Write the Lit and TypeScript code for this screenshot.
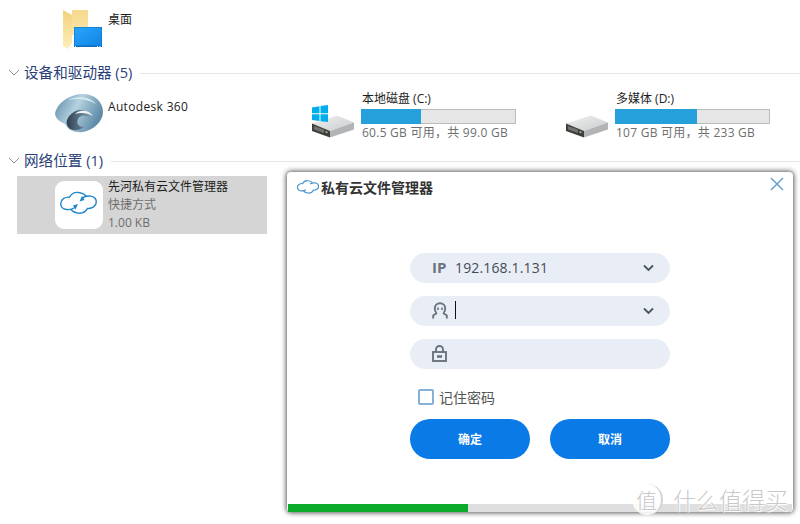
import { LitElement, html, css, svg } from "lit";
import { customElement } from "lit/decorators.js";

const chevron = html`<svg class="grp-chev" width="12" height="8" viewBox="0 0 12 8"><path d="M1 1l5 5 5-5" fill="none" stroke="#8a8f99" stroke-width="1"/></svg>`;

const cloud = svg`
  <path d="M20 26.5C17 28.5 14 28.8 11.5 28.5C7.5 28 5.7 25.5 5.7 22.5C5.7 18.5 10 15.7 14.5 16.2C16.5 12.5 20.5 11 24 11.5C26.5 11.8 29 12.8 31 14.8" />
  <path d="M27 17.1C30 15.1 33 14.8 35.5 15.1C39.5 15.6 41.3 18.1 41.3 21.1C41.3 25.1 37 27.9 32.5 27.4C30.5 31.1 26.5 32.6 23 32.1C20.5 31.8 18 30.8 16 28.8" />`;

const arrows = svg`
  <path d="M23 23L18 24.5L20.5 28.5Z" fill="#1f86c9" stroke="none"/>
  <path d="M24.5 20.5L29.5 19L27 15Z" fill="#1f86c9" stroke="none"/>`;

const driveBody = svg`
  <path d="M3 35.5L28 27.5L45 34.5L21 43Z" fill="url(#topface)"/>
  <path d="M3 35.5L21 43L21 49.5L3 43Z" fill="#3d3f3c"/>
  <path d="M21 43L45 34.5L45 41.5L21 49.5Z" fill="#b2b4b6"/>
  <path d="M5 38L15 41.5L15 45L5 41.5Z" fill="#6f746c"/>
  <path d="M16.5 43l2 .8v1.4l-2-.8z" fill="#a6d39a"/>`;

@customElement("app-root")
export class AppRoot extends LitElement {
  static styles = css`
    :host {
      display: block;
      position: relative;
      width: 800px;
      height: 524px;
      overflow: hidden;
      background: #fff;
      font-family: "Open Sans", "Noto Sans CJK SC", sans-serif;
      font-size: 12px;
      color: #1c1c1c;
    }
    .defs { position: absolute; width: 0; height: 0; }
    .explorer { display: flex; flex-direction: column; }
    .row { display: flex; padding: 4px 0 4px 17px; }
    .row.first { height: 57px; padding: 5px 0 0 17px; }
    .tile { display: flex; width: 250px; height: 58px; margin-right: 4px; flex: none; }
    .tile.sel { background: #d5d5d5; }
    .ico { margin-left: 38px; width: 48px; height: 58px; display: block; flex: none; overflow: visible; }
    .body { margin-left: 5px; padding-top: 2px; display: flex; flex-direction: column; line-height: 18px; white-space: nowrap; }
    .body.top { padding-top: 6px; }
    .body.low { padding-top: 10px; letter-spacing: .33px; }
    .sub { color: #6e6e6e; }
    .wide { letter-spacing: .25px; }
    .meter { width: 155px; height: 15px; margin: 1px 0 0 -1px; background: #e6e6e6; border: 1px solid #bcbcbc; box-sizing: border-box; }
    .fill { height: 15px; background: #26a0da; margin: -1px 0 0 -1px; }
    .grp { display: flex; align-items: center; height: 22px; padding-left: 8px; color: #2a3f78; font-size: 14.6px; white-space: nowrap; }
    .grp span { position: relative; top: -2px; }
    .grp-chev { margin-right: 4px; flex: none; }
    .grp i { flex: 1; height: 1px; background: #e5e5e5; margin-left: 8px; }

    .dialog {
      position: absolute; left: 287px; top: 172px; width: 506px; height: 340px;
      background: #fff; border-radius: 4px;
      box-shadow: 0 0 5px 1px rgba(0, 0, 0, 0.65);
      display: flex; flex-direction: column; box-sizing: border-box;
    }
    .title { display: flex; align-items: center; height: 32px; padding: 0 0 2px 10px; box-sizing: border-box; font-size: 14px; font-weight: 700; color: #333; position: relative; }
    .title svg.logo { margin-right: 2px; }
    .close { position: absolute; right: 9px; top: 5px; display: block; }
    .form { width: 260px; margin: 49px auto 0; display: flex; flex-direction: column; flex: 1; }
    .field {
      height: 30px; border-radius: 15px; background: #e9eef6; margin-bottom: 13px;
      display: flex; align-items: center; padding: 0 16px 0 22px; box-sizing: border-box;
      font-size: 14px; color: #444b55;
    }
    .field .lead { width: 23px; flex: none; display: flex; align-items: center; font-size: 15px; font-weight: 700; color: #6a737e; }
    .field .val { flex: 1; display: flex; align-items: center; letter-spacing: .15px; position: relative; top: -1px; }
    .field .lead span, .field .lead svg { position: relative; top: -1px; }
    .caret { width: 1px; height: 18px; background: #111; }
    .check { display: flex; align-items: center; margin: 3px 0 0 8px; height: 24px; font-size: 14px; color: #555; }
    .box { width: 16px; height: 16px; border: 2px solid #85b0dc; border-radius: 2px; box-sizing: border-box; margin-right: 5px; }
    .btns { display: flex; justify-content: space-between; margin-top: 10px; }
    .btn { width: 120px; height: 40px; border-radius: 20px; background: #0a7ae6; color: #fff; font-size: 12px; font-weight: 700; display: flex; align-items: center; justify-content: center; }
    .prog { height: 8px; background: #dfdfdf; margin: 0 1px; }
    .prog div { width: 180px; height: 100%; background: #0cab2b; }

    .mark { position: absolute; left: 632px; top: 482px; display: flex; align-items: center; color: #c9c9c9; text-shadow: 0 0 2px #fff, 0 0 2px #fff, 1px 1px 1px #fff; font-family: "Noto Sans CJK SC", sans-serif; font-weight: 300; }
    .seal { width: 31px; height: 31px; border-radius: 50%; background: rgba(255,255,255,.85); border-right: 2px solid #d2d2d2; box-sizing: border-box; display: flex; align-items: center; justify-content: center; font-size: 21px; }
    .brand { margin-left: 10px; font-size: 23px; white-space: nowrap; }
  `;

  render() {
    return html`
      <svg class="defs">
        <defs>
          <linearGradient id="topface" x1="0" y1="0" x2="1" y2="1"><stop offset="0" stop-color="#f2f2f2"/><stop offset="1" stop-color="#c9cbcc"/></linearGradient>
          <linearGradient id="back" x1="0" y1="0" x2="0" y2="1"><stop offset="0" stop-color="#f7d98c"/><stop offset="1" stop-color="#fbe6aa"/></linearGradient>
          <linearGradient id="spine" x1="0" y1="0" x2="0" y2="1"><stop offset="0" stop-color="#f4d27c"/><stop offset="1" stop-color="#fdeeb9"/></linearGradient>
          <linearGradient id="screen" x1="0" y1="0" x2="1" y2="1"><stop offset="0" stop-color="#2aa5fb"/><stop offset="1" stop-color="#0f85e6"/></linearGradient>
          <linearGradient id="swirl" x1="0" y1="0" x2="1" y2=".4"><stop offset="0" stop-color="#5a87a5"/><stop offset=".5" stop-color="#b5d2e0"/><stop offset="1" stop-color="#5f8ba8"/></linearGradient>
          <linearGradient id="swirl2" x1="0" y1="0" x2="1" y2="0"><stop offset="0" stop-color="#2f3f50"/><stop offset="1" stop-color="#7e9db2"/></linearGradient>
        </defs>
      </svg>

      <div class="explorer">
        <div class="row first">
          <div class="tile">
            <svg class="ico" viewBox="0 0 48 58">
              <path d="M17 5H33V30H17Z" fill="url(#back)"/>
              <path d="M8 5L17 10V38L13 44L8 41Z" fill="url(#spine)"/>
              <path d="M19 22H47V42H19Z" fill="#0f6cbd"/>
              <path d="M19.5 22.5H46.5V40.5H19.5Z" fill="url(#screen)"/>
              <path d="M20 41h1v1h-1zM42 41h1v1h-1zM44.5 41h1v1h-1z" fill="#dff"/>
            </svg>
            <div class="body top"><span>桌面</span></div>
          </div>
        </div>

        <div class="grp">${chevron}<span>设备和驱动器 (5)</span><i></i></div>
        <div class="row">
          <div class="tile">
            <svg class="ico" viewBox="0 0 48 58">
              <path d="M0 26C2 14 16 6 28 6C40 6 48 14 48 24C48 34 38 42 28 44C20 45 12 42 10 36C6 34 1 32 0 26Z" fill="url(#swirl)"/>
              <path d="M12 37C10 30 18 22 26 22C32 22 36 26 35 31C31 26 25 27 23 31C21 36 24 39 29 39C22 44 14 43 12 37Z" fill="url(#swirl2)"/>
              <path d="M20 26C25 21 34 22 38 28C33 25 26 24 20 26Z" fill="#eef4f7"/>
              <path d="M13 12C21 8 34 8 41 16C33 11 22 10 13 12Z" fill="#d9e8f0"/>
            </svg>
            <div class="body low"><span>Autodesk 360</span></div>
          </div>
          <div class="tile">
            <svg class="ico" viewBox="0 0 48 58">
              ${driveBody}
              <path d="M3 19.5L10.5 18.3V25.2H3ZM11.5 18.1L19 17V25.2H11.5ZM3 26.2H10.5V33.1L3 32ZM11.5 26.2H19V34L11.5 33.2Z" fill="#00adef"/>
            </svg>
            <div class="body">
              <span>本地磁盘 (C:)</span>
              <div class="meter"><div class="fill" style="width:60px"></div></div>
              <span class="sub wide">60.5 GB 可用，共 99.0 GB</span>
            </div>
          </div>
          <div class="tile">
            <svg class="ico" viewBox="0 0 48 58">${driveBody}</svg>
            <div class="body">
              <span>多媒体 (D:)</span>
              <div class="meter"><div class="fill" style="width:82px"></div></div>
              <span class="sub wide">107 GB 可用，共 233 GB</span>
            </div>
          </div>
        </div>

        <div class="grp">${chevron}<span>网络位置 (1)</span><i></i></div>
        <div class="row">
          <div class="tile sel">
            <svg class="ico" viewBox="0 0 48 58">
              <rect x="0" y="5" width="48" height="48" rx="9" fill="#fff"/>
              <g transform="translate(0 5)" fill="none" stroke="#1f86c9" stroke-width="1.4" stroke-linecap="round">${cloud}${arrows}</g>
            </svg>
            <div class="body">
              <span>先河私有云文件管理器</span>
              <span class="sub">快捷方式</span>
              <span class="sub">1.00 KB</span>
            </div>
          </div>
        </div>
      </div>

      <div class="dialog">
        <div class="title">
          <svg class="logo" width="22" height="16" viewBox="5 10 37 24" fill="none" stroke="#4a96cf" stroke-width="2">${cloud}</svg>
          <span>私有云文件管理器</span>
          <svg class="close" width="14" height="14" viewBox="0 0 14 14"><path d="M1 1l12 12M13 1L1 13" stroke="#5f9bc9" stroke-width="1.4"/></svg>
        </div>
        <div class="form">
          <div class="field">
            <span class="lead"><span>IP</span></span>
            <span class="val">192.168.1.131</span>
            <svg width="11" height="8" viewBox="0 0 11 8"><path d="M1 1.5l4.5 4.5L10 1.5" fill="none" stroke="#4a535e" stroke-width="1.8"/></svg>
          </div>
          <div class="field">
            <span class="lead"><svg width="16" height="17" viewBox="0 0 16 17" fill="none" stroke="#6a737e" stroke-width="1.9"><path d="M4.5 11C3 9.5 2.8 8 2.8 6.5C2.8 3.5 5 1.2 8 1.2S13.2 3.5 13.2 6.5C13.2 8 13 9.5 11.5 11"/><path d="M5 11L1.2 13.5V16.5M11 11L14.8 13.5V16.5"/><path d="M6 5.5v2.5M10 5.5v2.5" stroke-width="1.6"/></svg></span>
            <span class="val"><span class="caret"></span></span>
            <svg width="11" height="8" viewBox="0 0 11 8"><path d="M1 1.5l4.5 4.5L10 1.5" fill="none" stroke="#4a535e" stroke-width="1.8"/></svg>
          </div>
          <div class="field">
            <span class="lead"><svg width="15" height="17" viewBox="0 0 15 17" fill="none" stroke="#6a737e" stroke-width="1.9"><path d="M4 7V4.5C4 2.5 5.5 1 7.5 1S11 2.5 11 4.5V7"/><rect x="1" y="7" width="13" height="9"/><path d="M5 11.5h5" stroke-width="2.6"/></svg></span>
            <span class="val"></span>
          </div>
          <div class="check"><span class="box"></span><span>记住密码</span></div>
          <div class="btns"><div class="btn">确定</div><div class="btn">取消</div></div>
        </div>
        <div class="prog"><div></div></div>
      </div>

      <div class="mark"><span class="seal">值</span><span class="brand">什么值得买</span></div>
    `;
  }
}
